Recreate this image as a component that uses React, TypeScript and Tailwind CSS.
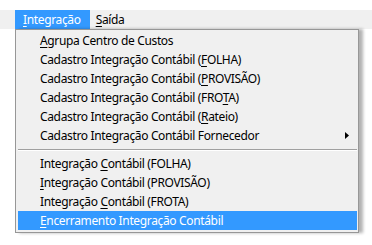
type Item = { pre: string; key: string; post: string; sub?: boolean };

const top: Item[] = [
  { pre: '', key: 'A', post: 'grupa Centro de Custos' },
  { pre: 'Cadastro Integração Contábil (', key: 'F', post: 'OLHA)' },
  { pre: 'Cadastro Integração Contábil (', key: 'P', post: 'ROVISÃO)' },
  { pre: 'Cadastro Integração Contábil (FRO', key: 'T', post: 'A)' },
  { pre: 'Cadastro Integração Contábil (', key: 'R', post: 'ateio)' },
  { pre: 'Cadastro Integração Contábil Fornecedor', key: '', post: '', sub: true },
];

const bottom: Item[] = [
  { pre: 'Integração ', key: 'C', post: 'ontábil (FOLHA)' },
  { pre: '', key: 'I', post: 'ntegração Contábil (PROVISÃO)' },
  { pre: 'Integração ', key: 'C', post: 'ontábil (FROTA)' },
];

function Row({ item, active }: { item: Item; active?: boolean }) {
  return (
    <div
      className={`h-[19px] flex items-center pl-[22px] pr-[8px] ${
        active ? 'bg-[#3399ff] text-white' : 'text-black'
      }`}
    >
      <span className="flex-1 whitespace-nowrap">
        {item.pre}
        {item.key && <span className="underline underline-offset-2">{item.key}</span>}
        {item.post}
      </span>
      {item.sub && (
        <svg width="4" height="7" viewBox="0 0 4 7">
          <path d="M0 0 L4 3.5 L0 7 Z" fill="#000" />
        </svg>
      )}
    </div>
  );
}

export default function App() {
  return (
    <div
      className="relative w-[372px] h-[245px] bg-white overflow-hidden text-[12px] leading-none tracking-[-0.35px]"
      style={{ fontFamily: '"Noto Sans", "Segoe UI", sans-serif' }}
    >
      <div className="h-[10px]" />
      <div className="h-[19px] bg-[#f0f0f0] flex pl-[15px]">
        <div className="h-full flex items-center pl-[8px] pr-[9px] bg-[#3399ff] text-white">
          <span className="underline underline-offset-2">I</span>ntegração
        </div>
        <div className="h-full flex items-center px-[6px] text-black">
          <span className="underline underline-offset-2">S</span>aída
        </div>
      </div>

      <div className="absolute left-[15px] top-[29px] w-[344px] bg-[#f0f0f0] border border-[#979797] pt-[1px] pb-[2px] pl-[2px] pr-[1px] shadow-[4px_0_3px_rgba(0,0,0,0.3)]">
        {top.map((it, i) => (
          <Row key={i} item={it} />
        ))}
        <div className="h-[9px] flex flex-col justify-center">
          <div className="h-[1px] bg-[#a0a0a0]" />
          <div className="h-[1px] bg-white" />
        </div>
        {bottom.map((it, i) => (
          <Row key={i} item={it} />
        ))}
        <Row item={{ pre: '', key: 'E', post: 'ncerramento Integração Contábil' }} active />
      </div>
    </div>
  );
}
